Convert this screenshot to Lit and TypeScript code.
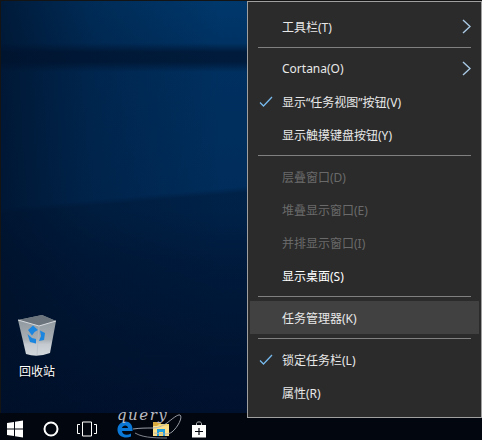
import { LitElement, html, css, svg } from "lit";
import { customElement } from "lit/decorators.js";

type MenuRow = {
  label?: string;
  sep?: boolean;
  checked?: boolean;
  arrow?: boolean;
  disabled?: boolean;
  active?: boolean;
  bright?: boolean;
};

const rows: MenuRow[] = [
  { label: "工具栏(T)", arrow: true },
  { sep: true },
  { label: "Cortana(O)", arrow: true },
  { label: "显示“任务视图”按钮(V)", checked: true },
  { label: "显示触摸键盘按钮(Y)" },
  { sep: true },
  { label: "层叠窗口(D)", disabled: true },
  { label: "堆叠显示窗口(E)", disabled: true },
  { label: "并排显示窗口(I)", disabled: true },
  { label: "显示桌面(S)", bright: true },
  { sep: true },
  { label: "任务管理器(K)", active: true },
  { sep: true },
  { label: "锁定任务栏(L)", checked: true },
  { label: "属性(R)" },
];

const checkIcon = svg`<path d="M1 6.5 L4.5 10 L13 1" fill="none" stroke="#76b9ed" stroke-width="1.3" />`;
const arrowIcon = svg`<path d="M1 1 L8 7.5 L1 14" fill="none" stroke="#a9c9e4" stroke-width="1.4" />`;

@customElement("context-menu")
export class ContextMenu extends LitElement {
  static styles = css`
    :host {
      display: block;
      position: absolute;
      left: 247px;
      top: 1px;
      width: 235px;
      height: 417px;
      box-sizing: border-box;
      padding: 8px 2px;
      background: #2b2b2b;
      border: 1px solid #a0a0a0;
      color: #e8e8e8;
      font-family: "Noto Sans", "Noto Sans CJK SC", sans-serif;
      font-size: 12px;
    }
    .row {
      height: 33px;
      display: flex;
      align-items: center;
      position: relative;
      padding-left: 32px;
      padding-right: 8px;
    }
    .row.active {
      background: #414141;
    }
    .row.disabled {
      color: #6a6a6a;
    }
    .row.bright {
      color: #fff;
    }
    .check {
      position: absolute;
      left: 9px;
      top: 11px;
      width: 14px;
      height: 11px;
    }
    .arrow {
      margin-left: auto;
      width: 9px;
      height: 15px;
    }
    .sep {
      height: 1px;
      margin: 4px 8px;
      background: #808080;
    }
  `;

  render() {
    return rows.map((r) =>
      r.sep
        ? html`<div class="sep"></div>`
        : html`<div class="row ${r.active ? "active" : ""} ${r.disabled ? "disabled" : ""} ${r.bright ? "bright" : ""}">
            ${r.checked ? html`<svg class="check" viewBox="0 0 14 11">${checkIcon}</svg>` : ""}
            <span>${r.label}</span>
            ${r.arrow ? html`<svg class="arrow" viewBox="0 0 9 15">${arrowIcon}</svg>` : ""}
          </div>`
    );
  }
}

@customElement("app-root")
export class AppRoot extends LitElement {
  static styles = css`
    :host {
      display: block;
      width: 482px;
      height: 440px;
      position: relative;
      overflow: hidden;
      background: #02060f;
    }
    .page {
      display: flex;
      flex-direction: column;
      height: 100%;
    }
    .desktop {
      flex: 1;
      position: relative;
      border-left: 1px solid #141414;
      border-top: 1px solid #141414;
      background:
        linear-gradient(180deg, transparent 42px, rgba(0, 18, 44, 0.7) 51px, rgba(0, 18, 44, 0.7) 61px, transparent 71px),
        linear-gradient(175deg, transparent 206px, rgba(0, 18, 44, 0.4) 212px),
        linear-gradient(90deg, rgba(0, 14, 36, 0.7) 0, rgba(0, 14, 36, 0.3) 90px, transparent 220px),
        linear-gradient(180deg, #00386c 0, #003060 60px, #002c5a 210px, #002048 260px, #001838 340px, #001030 412px);
    }
    .bin {
      position: absolute;
      left: 9px;
      top: 313px;
      width: 54px;
      display: flex;
      flex-direction: column;
      align-items: center;
      gap: 7px;
      color: #fff;
      font-family: "Noto Sans CJK SC", sans-serif;
      font-size: 12px;
      line-height: 14px;
      text-shadow: 0 1px 2px #000;
    }
    .bin svg {
      width: 40px;
      height: 43px;
    }
    .taskbar {
      height: 27px;
      flex: none;
      box-sizing: border-box;
      background: #02060f;
      display: flex;
      gap: 6px;
      padding-top: 7px;
    }
    .btn {
      width: 30px;
      height: 18px;
      display: flex;
      align-items: center;
      justify-content: center;
    }
    .btn.shift {
      margin-left: 2px;
    }
    .scribble {
      position: absolute;
      left: 116px;
      top: 408px;
      pointer-events: none;
    }
    .query {
      position: absolute;
      left: 117px;
      top: 406px;
      color: #b9bcc4;
      font-family: "DejaVu Serif", serif;
      font-style: italic;
      font-size: 15px;
      letter-spacing: 1.5px;
      line-height: 18px;
    }
  `;

  render() {
    return html`<div class="page">
      <div class="desktop">
        <div class="bin">
          <svg viewBox="0 0 40 43">
            <defs>
              <linearGradient id="bin-body" x1="0" y1="0" x2="0" y2="1">
                <stop offset="0" stop-color="#8b949b" />
                <stop offset="0.6" stop-color="#a7aeb4" />
                <stop offset="0.72" stop-color="#c4cad0" />
                <stop offset="1" stop-color="#d3d8dc" />
              </linearGradient>
            </defs>
            <path d="M1 6 L25 1 L39 7 L33 39 Q20 44 9 40 Z" fill="url(#bin-body)" />
            <path d="M1 6 L25 1 L39 7 L22 12 Z" fill="#6b747c" />
            <path d="M1 6 L22 12 L39 7" fill="none" stroke="#d5dade" stroke-width="1" />
            <path d="M22 12 L20 41" stroke="#b3bbc2" stroke-width="0.6" fill="none" />
            <path d="M11 16 L16 11.5 L21 16 L17.5 18 L15 21.5 Z" fill="#1a86e0" />
            <path d="M23 16.5 L28 19 L27 26 L22 27 L24 22 Z" fill="#1a86e0" />
            <path d="M10.5 20 L15 24 L19 25 L19 29.5 L13 28 Z" fill="#1a86e0" />
          </svg>
          <span>回收站</span>
        </div>
      </div>
      <div class="taskbar">
        <div class="btn">
          <svg width="16" height="18" viewBox="0 0 16 18">
            <path d="M0 3 L7 2 V8.4 H0 Z M8 1.8 L16 0.5 V8.4 H8 Z M0 9.5 H7 V16 L0 15 Z M8 9.5 H16 V17.5 L8 16.2 Z" fill="#fff" />
          </svg>
        </div>
        <div class="btn">
          <svg width="16" height="16" viewBox="0 0 16 16">
            <circle cx="8" cy="8" r="6.5" fill="none" stroke="#fff" stroke-width="2" />
          </svg>
        </div>
        <div class="btn">
          <svg width="20" height="16" viewBox="0 0 20 16">
            <path d="M5.5 1 H14.5 V15 H5.5 Z M3 3.5 H0.5 V12.5 H3 M17 3.5 H19.5 V12.5 H17" fill="none" stroke="#fff" stroke-width="1" />
          </svg>
        </div>
        <div class="btn shift">
          <svg width="16" height="17" viewBox="0 0 16 17">
            <path d="M15.5 10 H5 C5.2 13.5 9.5 15 14 12.6 V15.6 C8 18 1 15.6 0.5 9.5 C0.2 4.5 3.5 0.5 8.5 0.5 C13 0.5 16 4 15.5 10 Z M5 7 H11 C11 3.6 5.6 3.6 5 7 Z" fill="#0a78d7" fill-rule="evenodd" />
          </svg>
        </div>
        <div class="btn">
          <svg width="18" height="16" viewBox="0 0 18 16">
            <path d="M1 1 H7 L9 3 H17 V15 H1 Z" fill="#f6d76d" />
            <path d="M1 5 H17 V15 H13 V10 H5 V15 H1 Z" fill="#fce08a" />
            <path d="M5 8 H13 V15 H11 V11 H7 V15 H5 Z" fill="#1f9fe0" />
            <path d="M1 1 H7 L9 3 H7 L5 5 H1 Z" fill="#d8a93e" />
          </svg>
        </div>
        <div class="btn shift">
          <svg width="14" height="17" viewBox="0 0 14 17">
            <path d="M4.5 4 V2.5 C4.5 0.4 9.5 0.4 9.5 2.5 V4" fill="none" stroke="#bbb" stroke-width="1" />
            <path d="M0 4 H14 V16.5 H0 Z" fill="#fff" />
            <path d="M7 7 V14 M3 10.5 H11" fill="none" stroke="#02060f" stroke-width="1.2" />
          </svg>
        </div>
      </div>
      <span class="query">query</span>
      <svg class="scribble" width="80" height="32" viewBox="0 0 80 32">
        <path d="M17 21 C24 20 30 20 37 20 C43 20 48 17 51 15 C56 11 62 6 64 7 C67 9 62 19 56 24 C52 27 46 26 38 25" fill="none" stroke="#aab0b8" stroke-width="0.9" />
        <path d="M19 25 C24 28 30 29 36 29.5 C42 30 47 30 51 30" fill="none" stroke="#8d929a" stroke-width="0.9" />
      </svg>
      <context-menu></context-menu>
    </div>`;
  }
}
